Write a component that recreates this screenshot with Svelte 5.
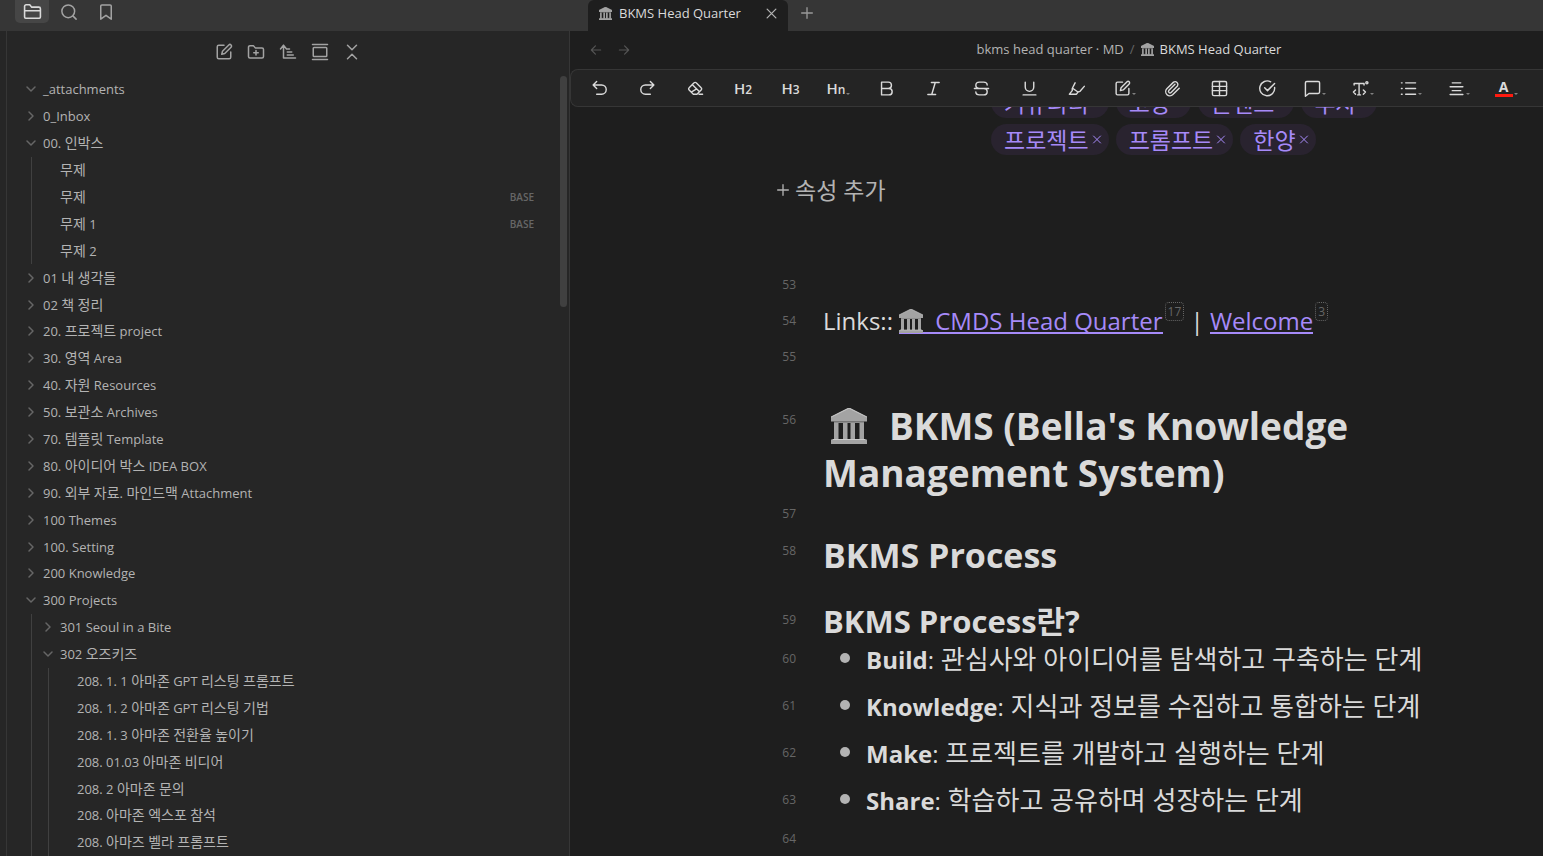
<script lang="ts">
  type Row = { name: string; level: number; state?: 'open' | 'closed'; base?: boolean };

  const rows: Row[] = [
    { name: '_attachments', level: 0, state: 'open' },
    { name: '0_Inbox', level: 0, state: 'closed' },
    { name: '00. 인박스', level: 0, state: 'open' },
    { name: '무제', level: 1 },
    { name: '무제', level: 1, base: true },
    { name: '무제 1', level: 1, base: true },
    { name: '무제 2', level: 1 },
    { name: '01 내 생각들', level: 0, state: 'closed' },
    { name: '02 책 정리', level: 0, state: 'closed' },
    { name: '20. 프로젝트 project', level: 0, state: 'closed' },
    { name: '30. 영역 Area', level: 0, state: 'closed' },
    { name: '40. 자원 Resources', level: 0, state: 'closed' },
    { name: '50. 보관소 Archives', level: 0, state: 'closed' },
    { name: '70. 템플릿 Template', level: 0, state: 'closed' },
    { name: '80. 아이디어 박스 IDEA BOX', level: 0, state: 'closed' },
    { name: '90. 외부 자료. 마인드맥 Attachment', level: 0, state: 'closed' },
    { name: '100 Themes', level: 0, state: 'closed' },
    { name: '100. Setting', level: 0, state: 'closed' },
    { name: '200 Knowledge', level: 0, state: 'closed' },
    { name: '300 Projects', level: 0, state: 'open' },
    { name: '301 Seoul in a Bite', level: 1, state: 'closed' },
    { name: '302 오즈키즈', level: 1, state: 'open' },
    { name: '208. 1. 1 아마존 GPT 리스팅 프롬프트', level: 2 },
    { name: '208. 1. 2 아마존 GPT 리스팅 기법', level: 2 },
    { name: '208. 1. 3 아마존 전환율 높이기', level: 2 },
    { name: '208. 01.03 아마존 비디어', level: 2 },
    { name: '208. 2 아마존 문의', level: 2 },
    { name: '208. 아마존 엑스포 참석', level: 2 },
    { name: '208. 아마즈 벨라 프롬프트', level: 2 },
  ];

  const icons: Record<string, string> = {
    folder: '<path d="M2 19V5.500a2 2 0 0 1 2-2h4.500l2.500 3h9a2 2 0 0 1 2 2V19a1.500 1.500 0 0 1-1.500 1.500h-17A1.500 1.500 0 0 1 2 19ZM2 11h20"/>',
    search: '<circle cx="11" cy="11" r="8.500"/><path d="m17.500 17.500 4 4"/>',
    bookmark: '<path d="M19 21.500l-7-5-7 5V4a1.500 1.500 0 0 1 1.500-1.500h11A1.500 1.500 0 0 1 19 4z"/>',
    edit: '<path d="M12 3H5a2 2 0 0 0-2 2v14a2 2 0 0 0 2 2h14a2 2 0 0 0 2-2v-7"/><path d="M18.400 2.600a2 2 0 0 1 3 3L13 14l-4 1 1-4Z"/>',
    folderPlus: '<path d="M2 18V5.500a2 2 0 0 1 2-2h4.500l2.500 3h9a2 2 0 0 1 2 2V18a2 2 0 0 1-2 2H4a2 2 0 0 1-2-2ZM12 10v6M9 13h6"/>',
    sort: '<path d="m2 8 4-5 4 5M6 3v17h16M11 8h3M11 12h6M11 16h8"/>',
    gallery: '<path d="M2 2h20M2 22h20"/><rect x="3" y="6" width="18" height="12" rx="1"/>',
    collapse: '<path d="m6 21 6-6 6 6M6 3l6 6 6-6"/>',
    chevron: '<path d="m4 8 8 8 8-8"/>',
    close: '<path d="M5 5l14 14M19 5 5 19"/>',
    plus: '<path d="M4 12h16M12 4v16"/>',
    back: '<path d="M20 12H4M11 5l-7 7 7 7"/>',
    forward: '<path d="M4 12h16M13 5l7 7-7 7"/>',
    undo: '<path d="M8 12 3 7l5-5M3 7h12a6.500 6.500 0 0 1 0 13H8"/>',
    redo: '<path d="m16 12 5-5-5-5M21 7H9a6.500 6.500 0 0 0 0 13h7"/>',
    eraser: '<path d="m9 20-6-6a2 2 0 0 1 0-3l7-7a2 2 0 0 1 3 0l7 7a2 2 0 0 1 0 3l-6 6ZM8 7l9 9M13 13l-7 4M17 20h5"/>',
    bold: '<path d="M5 3h9.500a4.500 4.500 0 0 1 0 9H5M5 3v18h10.500a4.500 4.500 0 0 0 0-9"/>',
    italic: '<path d="M9 3.500h11M4 20.500h11M14.500 3.500l-5 17"/>',
    strike: '<path d="M20 7c0-2-2-4-5-4H9C6 3 4 5 4 7.500S6 12 9 12h6c3 0 5 2 5 4.500S18 21 15 21H9c-3 0-5-2-5-4M2 12h20"/>',
    underline: '<path d="M6 3v7a6 6 0 0 0 12 0V3M3 21h18"/>',
    marker: '<path d="m10 4-4 8v3l-4 5h10l2-3 3-1 6-7M7 12l7 5"/>',
    clip: '<path d="m21.500 11.500-9 9a5.700 5.700 0 0 1-8.500-8l9.500-9.500a4 4 0 0 1 5.500 5.500l-9 9a2 2 0 0 1-3-3l8.500-8.500"/>',
    table: '<rect x="2" y="2" width="20" height="20" rx="2"/><path d="M2 9h20M2 15h20M12 2v20"/>',
    check: '<path d="M22 10.500A10.500 10.500 0 1 1 16.500 2.500M8 11l4 4L22 5"/>',
    comment: '<path d="M22 17a2 2 0 0 1-2 2H7l-5 4V4a2 2 0 0 1 2-2h16a2 2 0 0 1 2 2z"/>',
    textType: '<path d="M3 7V5h14v2M10 5v16M8 21h4M5 14l-3 3 3 3M16 14l3 3-3 3"/><circle cx="21" cy="4" r="1.500"/>',
    list: '<path d="M8 4h14M8 12h14M8 20h14M2 4h1M2 12h1M2 20h1"/>',
    align: '<path d="M6 4h12M3 9.500h18M6 15h12M3 20.500h18"/>',
  };

  const tools = [
    { label: 'Undo', icon: 'undo' },
    { label: 'Redo', icon: 'redo' },
    { label: 'Clear formatting', icon: 'eraser' },
    { label: 'Heading 2', text: 'H', sub: '2' },
    { label: 'Heading 3', text: 'H', sub: '3' },
    { label: 'Headings', text: 'H', sub: 'n', menu: true },
    { label: 'Bold', icon: 'bold' },
    { label: 'Italic', icon: 'italic' },
    { label: 'Strikethrough', icon: 'strike' },
    { label: 'Underline', icon: 'underline' },
    { label: 'Highlight', icon: 'marker' },
    { label: 'Callout', icon: 'edit', menu: true },
    { label: 'Attach', icon: 'clip' },
    { label: 'Table', icon: 'table' },
    { label: 'Task', icon: 'check' },
    { label: 'Comment', icon: 'comment', menu: true },
    { label: 'Text style', icon: 'textType', menu: true },
    { label: 'List', icon: 'list', menu: true },
    { label: 'Align', icon: 'align', menu: true },
    { label: 'Font color', color: true, menu: true },
  ];

  const tagRows = [
    ['커뮤니티', '고양', '콘텐츠', '투자'],
    ['프로젝트', '프롬프트', '한양'],
  ];

  const steps = [
    { no: 60, name: 'Build', text: '관심사와 아이디어를 탐색하고 구축하는 단계' },
    { no: 61, name: 'Knowledge', text: '지식과 정보를 수집하고 통합하는 단계' },
    { no: 62, name: 'Make', text: '프로젝트를 개발하고 실행하는 단계' },
    { no: 63, name: 'Share', text: '학습하고 공유하며 성장하는 단계' },
  ];

  // hangul runs are set slightly larger than latin ones
  function split(s: string) {
    return s.split(/([가-힣]+)/).filter(Boolean);
  }
</script>

{#snippet icon(name: string, size: number, width = 2)}
  <svg class="icon" width={size} height={size} viewBox="0 0 24 24" stroke-width={width} aria-hidden="true">
    {@html icons[name]}
  </svg>
{/snippet}

{#snippet temple(size: number)}
  <svg class="temple" width={size} height={size} viewBox="0 0 24 24" aria-hidden="true">
    <path fill="#a3a3a3" d="M12 0 24 6v3H0V6Z" />
    <path fill="#8c8c8c" d="M2 9h20v1H2Z" />
    <path fill="#a3a3a3" d="M2 10h3v11H2ZM8 10h3v11H8ZM13 10h3v11h-3ZM19 10h3v11h-3Z" />
    <path fill="#a3a3a3" d="M0 21h24v3H0Z" />
    <path fill="none" stroke="#c8c8c8" d="M0 6 12 0l12 6M1 21h22" stroke-width="0.7" />
  </svg>
{/snippet}

<div class="app">
  <header class="titlebar">
    <nav class="side-tabs">
      <button class="active" aria-label="Files">{@render icon('folder', 19)}</button>
      <button aria-label="Search">{@render icon('search', 18)}</button>
      <button aria-label="Bookmarks">{@render icon('bookmark', 18)}</button>
    </nav>
    <div class="tabs">
      <div class="tab">
        {@render temple(13)}
        <span class="tab-title">BKMS Head Quarter</span>
        <button aria-label="Close tab">{@render icon('close', 15)}</button>
      </div>
      <button class="new-tab" aria-label="New tab">{@render icon('plus', 16)}</button>
    </div>
  </header>

  <div class="workspace">
    <aside class="sidebar">
      <div class="actions">
        <button aria-label="New note">{@render icon('edit', 18)}</button>
        <button aria-label="New folder">{@render icon('folderPlus', 18)}</button>
        <button aria-label="Sort">{@render icon('sort', 18)}</button>
        <button aria-label="Auto reveal">{@render icon('gallery', 18)}</button>
        <button aria-label="Collapse all">{@render icon('collapse', 18)}</button>
      </div>
      <div class="tree">
        {#each rows as row}
          <button class="row">
            {#each Array(row.level) as _}
              <span class="guide"></span>
            {/each}
            <span class="arrow" class:closed={row.state === 'closed'}>
              {#if row.state}{@render icon('chevron', 12, 3)}{/if}
            </span>
            <span class="name">
              {#each split(row.name) as part}<span class:ko={/[가-힣]/.test(part)}>{part}</span>{/each}
            </span>
            {#if row.base}<span class="badge">BASE</span>{/if}
          </button>
        {/each}
      </div>
      <div class="scrollbar"></div>
    </aside>

    <main>
      <div class="view-header">
        <button aria-label="Back">{@render icon('back', 14)}</button>
        <button aria-label="Forward">{@render icon('forward', 14)}</button>
        <div class="crumbs">
          <span>bkms head quarter · MD</span>
          <span class="slash">/</span>
          {@render temple(13)}
          <span class="current">BKMS Head Quarter</span>
        </div>
      </div>

      <div class="toolbar">
        {#each tools as tool}
          <button aria-label={tool.label}>
            {#if tool.icon}
              {@render icon(tool.icon, 17)}
            {:else if tool.color}
              <span class="color">A</span>
            {:else}
              <span class="heading">{tool.text}<small>{tool.sub}</small></span>
            {/if}
            {#if tool.menu}<span class="caret"></span>{/if}
          </button>
        {/each}
      </div>

      <div class="editor">
        <div class="tags">
          {#each tagRows as tagRow}
            <div class="tag-row">
              {#each tagRow as tag}
                <span class="tag">{tag}<button aria-label="Remove {tag}">{@render icon('close', 13)}</button></span>
              {/each}
            </div>
          {/each}
        </div>
        <button class="add-property">{@render icon('plus', 16)}속성 추가</button>

        <div class="line"><span class="no">53</span></div>
        <div class="line">
          <span class="no">54</span>
          <p>
            Links:: <a href="#cmds">{@render temple(24)}CMDS Head Quarter</a><sup>17</sup>
            | <a href="#welcome">Welcome</a><sup>3</sup>
          </p>
        </div>
        <div class="line"><span class="no">55</span></div>
        <div class="line first">
          <span class="no">56</span>
          <h1>{@render temple(36)}BKMS (Bella's Knowledge Management System)</h1>
        </div>
        <div class="line"><span class="no">57</span></div>
        <div class="line second">
          <span class="no">58</span>
          <h2>BKMS Process</h2>
        </div>
        <div class="line third">
          <span class="no">59</span>
          <h3>BKMS Process란?</h3>
        </div>
        <div class="steps">
          {#each steps as step}
            <div class="line">
              <span class="no">{step.no}</span>
              <p class="item"><strong>{step.name}</strong><span class="colon">:</span>{' '}{step.text}</p>
            </div>
          {/each}
        </div>
        <div class="line"><span class="no">64</span></div>
      </div>
    </main>
  </div>
</div>

<style>
  :global(body) {
    margin: 0;
    background: #1e1e1e;
  }
  .app {
    display: flex;
    flex-direction: column;
    height: 100vh;
    overflow: hidden;
    color: #dadada;
    font-family: 'Open Sans', 'Noto Sans CJK KR', sans-serif;
    font-size: 13px;
  }
  button {
    display: flex;
    align-items: center;
    justify-content: center;
    padding: 0;
    border: 0;
    background: none;
    color: inherit;
    font: inherit;
    cursor: pointer;
  }
  .icon {
    flex: none;
    fill: none;
    stroke: currentColor;
    stroke-linecap: round;
    stroke-linejoin: round;
  }
  .temple {
    flex: none;
  }

  .titlebar {
    display: flex;
    flex: none;
    height: 31px;
    background: #363636;
  }
  .side-tabs {
    display: flex;
    align-items: flex-start;
    gap: 3px;
    width: 573px;
    padding-left: 15px;
    color: #a3a3a3;
  }
  .side-tabs button {
    width: 34px;
    height: 23px;
    border-radius: 0 0 5px 5px;
  }
  .side-tabs .active {
    background: #464646;
    color: #dadada;
  }
  .tabs {
    display: flex;
    flex: 1;
  }
  .tab {
    display: flex;
    align-items: center;
    gap: 7px;
    width: 200px;
    box-sizing: border-box;
    padding: 0 9px 5px 11px;
    border-radius: 6px 6px 0 0;
    background: #1e1e1e;
  }
  .tab-title {
    flex: 1;
  }
  .tab button {
    color: #b3b3b3;
  }
  .new-tab {
    width: 38px;
    height: 25px;
    color: #999999;
  }

  .workspace {
    display: flex;
    flex: 1;
    min-height: 0;
  }
  .sidebar {
    position: relative;
    display: flex;
    flex-direction: column;
    flex: none;
    width: 570px;
    box-sizing: border-box;
    border-right: 1px solid #363636;
    background: #262626;
    overflow: hidden;
  }
  .sidebar::before {
    content: '';
    position: absolute;
    top: 0;
    bottom: 0;
    left: 6px;
    width: 1px;
    background: #363636;
  }
  .actions {
    display: flex;
    justify-content: center;
    flex: none;
    gap: 14px;
    height: 45px;
    padding-left: 7px;
    color: #a3a3a3;
  }
  .actions button {
    width: 18px;
    height: 42px;
  }
  .tree {
    display: flex;
    flex-direction: column;
    flex: 1;
    color: #b3b3b3;
  }
  .row {
    flex: 1 0 26px;
    width: 100%;
    justify-content: flex-start;
    padding: 0 35px 0 25px;
    text-align: left;
  }
  .guide {
    align-self: stretch;
    width: 11px;
    margin-left: 6px;
    box-sizing: border-box;
    border-left: 1px solid #404040;
  }
  .arrow {
    display: flex;
    width: 12px;
    margin-right: 6px;
    color: #666666;
  }
  .arrow.closed {
    transform: rotate(-90deg);
  }
  .name {
    flex: 1;
    line-height: 20px;
    white-space: pre;
  }
  .ko {
    font-size: 14px;
    line-height: 16px;
  }
  .badge {
    color: #666666;
    font-size: 10px;
    font-weight: 600;
  }
  .scrollbar {
    position: absolute;
    top: 45px;
    right: 2px;
    width: 7px;
    height: 231px;
    border-radius: 4px;
    background: #404040;
  }

  main {
    display: flex;
    flex-direction: column;
    flex: 1;
    min-width: 0;
    background: #1e1e1e;
  }
  .view-header {
    display: flex;
    align-items: center;
    flex: none;
    gap: 14px;
    height: 38px;
    padding-left: 19px;
    color: #555555;
  }
  .crumbs {
    display: flex;
    align-items: center;
    justify-content: center;
    flex: 1;
    gap: 6px;
    padding: 0 0 2px 70px;
    color: #b3b3b3;
  }
  .slash {
    color: #666666;
  }
  .current {
    color: #dadada;
  }
  .toolbar {
    display: flex;
    flex: none;
    height: 36px;
    padding: 0 13px 0 5px;
    border: 1px solid #363636;
    border-right: 0;
    border-radius: 8px 0 0 8px;
    background: #242424;
  }
  .toolbar button {
    flex: 1;
  }
  .heading {
    font-size: 15px;
    font-weight: 600;
  }
  .heading small {
    font-size: 12px;
  }
  .color {
    width: 18px;
    border-bottom: 3px solid #ff1a0f;
    font-size: 14px;
    font-weight: 700;
    line-height: 14px;
  }
  .caret {
    align-self: flex-end;
    margin: 0 0 11px 1px;
    border: 2px solid transparent;
    border-top-color: #808080;
    border-bottom: 0;
  }

  .editor {
    flex: 1;
    min-height: 0;
    padding: 0 68px 0 205px;
    overflow: hidden;
    font-size: 24px;
    line-height: 36px;
  }
  .tags {
    display: flex;
    flex-direction: column;
    gap: 6px;
    margin-top: -20px;
    padding-left: 216px;
  }
  .tag-row {
    display: flex;
    gap: 7px;
  }
  .tag {
    display: flex;
    align-items: center;
    gap: 2px;
    height: 31px;
    padding: 0 6px 0 13px;
    border-radius: 16px;
    background: #29232f;
    color: #a68af9;
    font-size: 23px;
  }
  .tag .icon {
    width: 12px;
  }
  .add-property {
    gap: 4px;
    height: 36px;
    margin: 17px 0 59px;
    color: #b3b3b3;
    font-size: 23px;
  }
  .line {
    display: flex;
    min-height: 36px;
  }
  .no {
    flex: none;
    width: 21px;
    margin-right: 27px;
    color: #666666;
    font-size: 12px;
    text-align: right;
  }
  p,
  h1,
  h2,
  h3 {
    margin: 0;
  }
  p .temple {
    margin: 0 12px 0 0;
    vertical-align: -3px;
  }
  h1 .temple {
    margin: 0 22px 0 8px;
    vertical-align: -4px;
  }
  /* drawn as a background so that the line also runs under the icon */
  a {
    background: linear-gradient(#a68af9, #a68af9) 0 calc(100% - 3px) / 100% 2px no-repeat;
    color: #a68af9;
    text-decoration: none;
  }
  sup {
    margin: 0 0 0 2px;
    padding: 0 2px;
    border: 1px dotted #666666;
    border-radius: 4px;
    color: #666666;
    font-size: 12px;
    line-height: 12px;
    vertical-align: 14px;
  }
  h1 {
    font-size: 37px;
    line-height: 47px;
  }
  h2 {
    font-size: 34px;
    line-height: 44px;
  }
  h3 {
    font-size: 31px;
    line-height: 38px;
  }
  .first {
    margin-top: 27px;
  }
  .second {
    margin-top: 1px;
  }
  .third {
    margin-top: 25px;
  }
  .steps {
    display: flex;
    flex-direction: column;
    gap: 10px;
    margin: 1px 0 2px;
  }
  .item {
    position: relative;
    padding-left: 43px;
    font-size: 26px;
  }
  .item::before {
    content: '';
    position: absolute;
    top: 12px;
    left: 17px;
    width: 10px;
    height: 10px;
    border-radius: 50%;
    background: #b3b3b3;
  }
  strong,
  .colon {
    font-size: 24px;
  }
</style>
